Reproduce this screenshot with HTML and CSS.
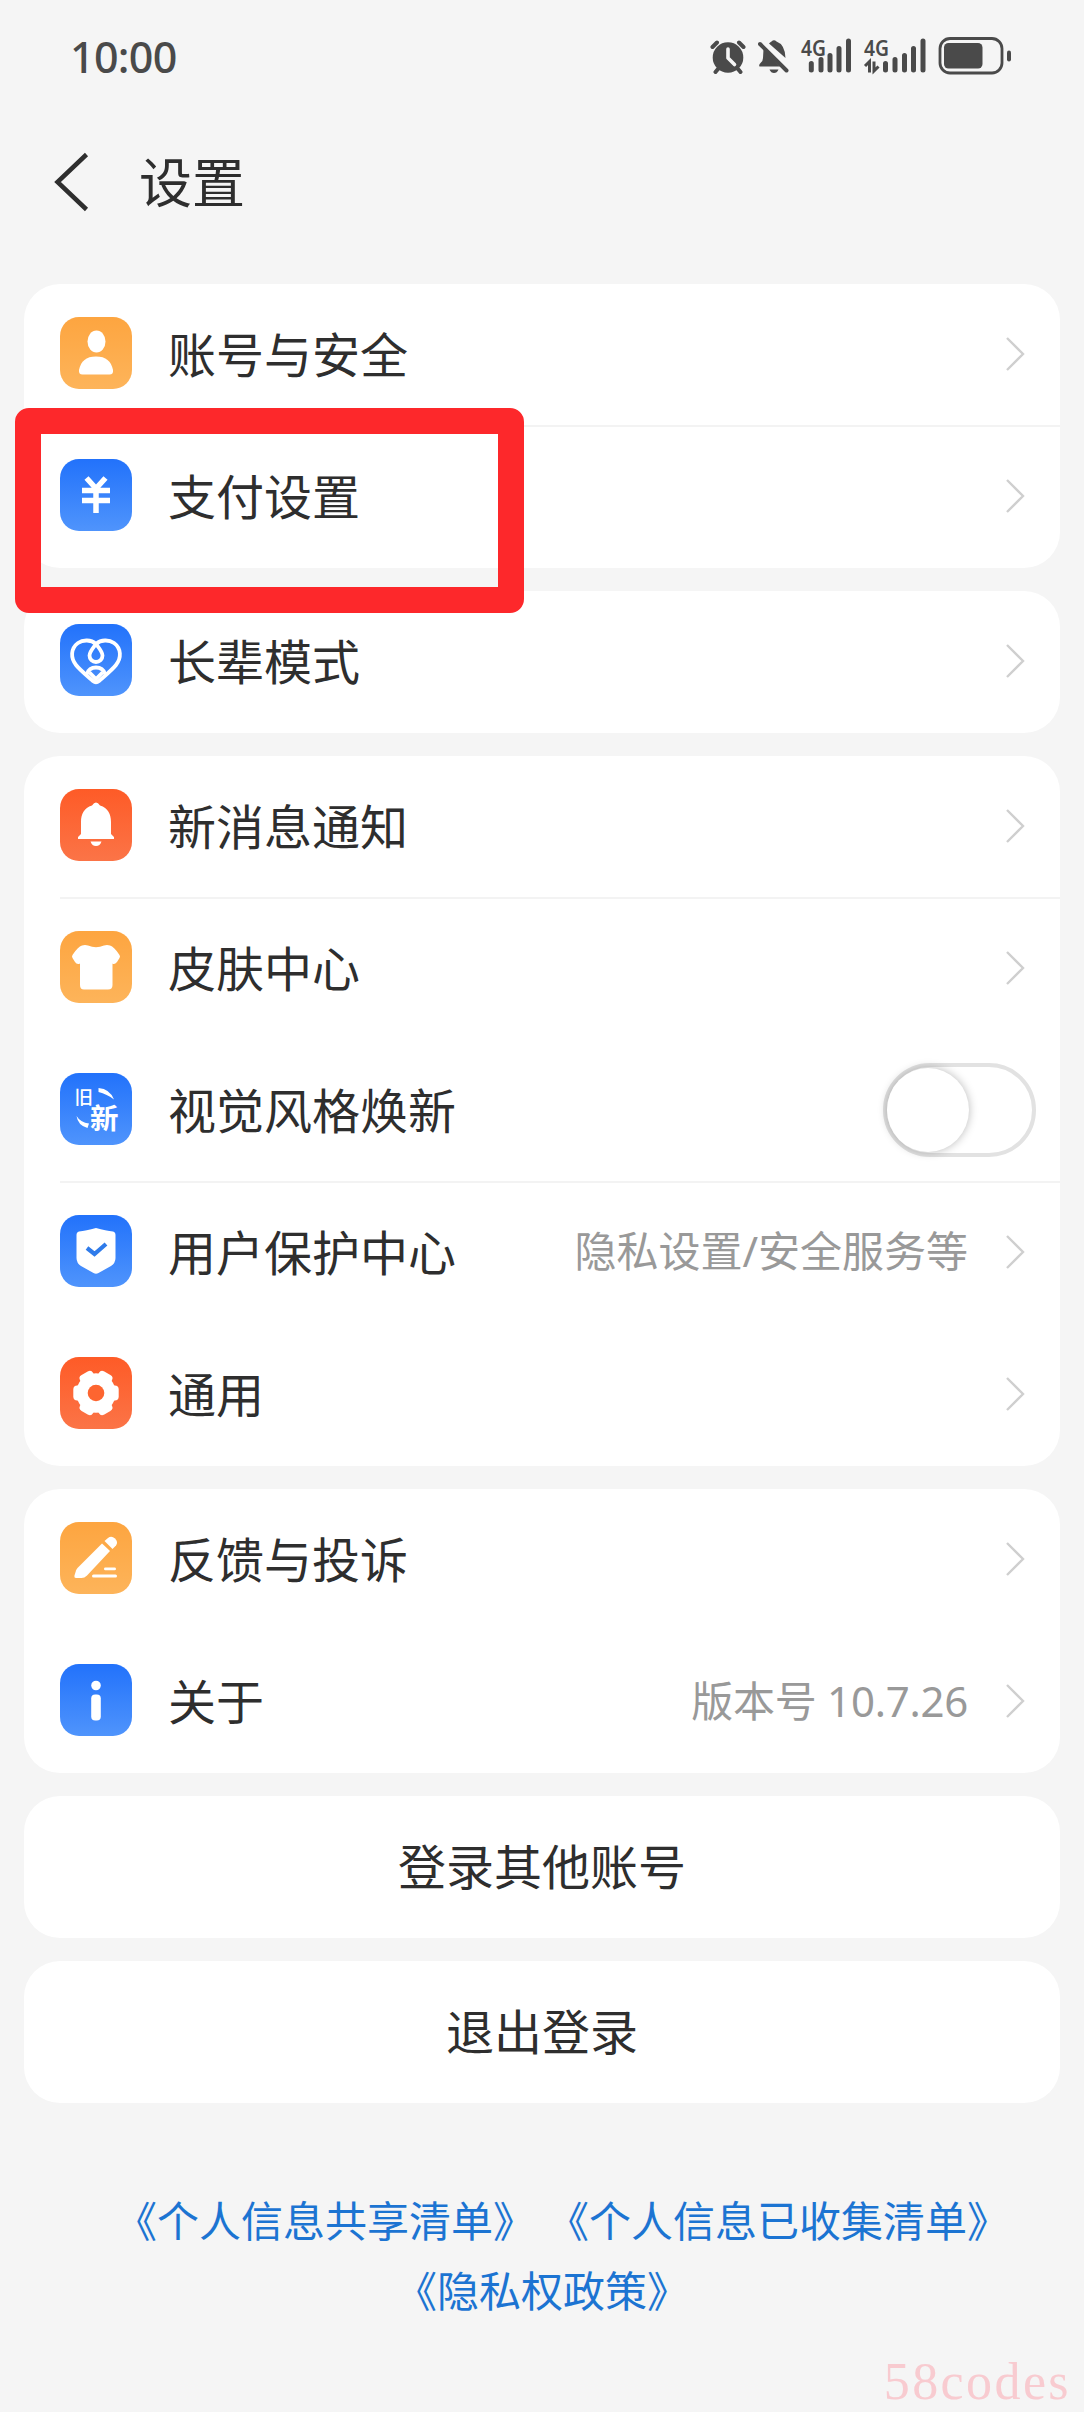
FILE: index.html
```html
<!DOCTYPE html>
<html lang="zh-CN">
<head>
<meta charset="utf-8">
<title>设置</title>
<link rel="stylesheet" href="styles.css">
</head>
<body>
<svg class="defs" width="0" height="0">
  <defs>
    <symbol id="chevron" viewBox="0 0 20 36"><path d="M2 2 L18 18 L2 34" fill="none" stroke="#cfcfcf" stroke-width="2.4"/></symbol>
  </defs>
</svg>
<div class="status">
  <span class="clock">10:00</span>
  <div class="status-icons">
    <svg width="36" height="40" viewBox="0 0 36 40">
      <g fill="none" stroke="#4a4a4a" stroke-width="4" stroke-linecap="round">
        <path d="M2.500 10 L7 5.500 M33.500 10 L29 5.500 M8 32 L5.500 35 M28 32 L30.500 35"/>
      </g>
      <circle cx="18" cy="20.500" r="15.300" fill="#4a4a4a"/>
      <path d="M18 12 V21 L24.500 27.500" fill="none" stroke="#f5f5f5" stroke-width="3.600" stroke-linecap="round" stroke-linejoin="round"/>
    </svg>
    <svg width="31" height="40" viewBox="0 0 31 40">
      <g fill="#4a4a4a">
        <path d="M5.500 12 L22 29.500 H1.500 Q0.500 28 2.500 26 Q5 24 5 21 Z"/>
        <path d="M11 6.500 Q12.500 5 13.500 4.500 Q16 2 18.500 4.500 Q27 7.500 27.500 21 Z"/>
        <path d="M11.500 32.500 H20.500 Q19 36 16 36 Q13 36 11.500 32.500 Z"/>
      </g>
      <path d="M2 7 L28.500 33.500" stroke="#4a4a4a" stroke-width="4" stroke-linecap="round"/>
    </svg>
    <svg class="signal" width="51" height="40" viewBox="0 0 51 40">
      <text x="0" y="18.500" textLength="25" lengthAdjust="spacingAndGlyphs">4G</text>
      <path d="M10.300 26.500 V33 M20 22.500 V33 M29 18.500 V33 M38 11.500 V33 M47.500 4 V33"/>
    </svg>
    <svg class="signal" width="62" height="40" viewBox="0 0 62 40">
      <text x="0" y="18.500" textLength="25" lengthAdjust="spacingAndGlyphs">4G</text>
      <path d="M21.500 26.500 V33 M31 22.500 V33 M40.500 18.500 V33 M49.500 11.500 V33 M59 4 V33"/>
      <path class="arrows" d="M1 29 L5.500 24.500 V35.500 M10 24.500 V34 L14.500 29.500"/>
    </svg>
    <svg width="74" height="40" viewBox="0 0 74 40">
      <rect x="2" y="1.500" width="62" height="34.500" rx="10" fill="none" stroke="#4a4a4a" stroke-width="2.800"/>
      <rect x="6" y="6" width="38.500" height="25.500" rx="4.500" fill="#4a4a4a"/>
      <rect x="69" y="13.500" width="4" height="11" rx="2" fill="#4a4a4a"/>
    </svg>
  </div>
</div>
<header class="header">
  <svg width="36" height="60" viewBox="0 0 36 60"><path d="M33.500 2.500 L4.500 30 L33.500 57.500" fill="none" stroke="#2e2e2e" stroke-width="4.500"/></svg>
  <h1>设置</h1>
</header>
<main class="list">
  <section class="card">
    <div class="row">
      <svg class="icon amber" viewBox="0 0 72 72"><ellipse cx="36.500" cy="24.500" rx="9" ry="11" fill="#fff"/><path d="M36 39.500 C46 39.500 51 44 53 53 Q53.500 57.500 49.500 57.500 H22.500 Q18.500 57.500 19 53 C21 44 26 39.500 36 39.500 Z" fill="#fff"/></svg>
      <span class="label">账号与安全</span><svg class="chev"><use href="#chevron"/></svg>
    </div>
    <div class="row line">
      <svg class="icon blue" viewBox="0 0 72 72"><path d="M26.500 19 L36 29.500 L45.500 19 M22 31.500 H50 M22 41.500 H50 M36 29 V54" fill="none" stroke="#fff" stroke-width="5.500"/></svg>
      <span class="label">支付设置</span><svg class="chev"><use href="#chevron"/></svg>
      <div class="highlight"></div>
    </div>
  </section>
  <section class="card">
    <div class="row">
      <svg class="icon blue" viewBox="0 0 72 72"><g fill="none" stroke="#fff" stroke-width="3.800" stroke-linejoin="round"><path d="M36 20 C31 15.500 23 15.500 18 19 C10.500 24.500 10.500 34 16 41 C19 45 25 50 33 57 Q36 59.500 39 57 C47 50 53 45 56 41 C61.500 34 61.500 24.500 54 19 C49 15.500 41 15.500 36 20 Z"/><path d="M36 20 C33 24 29.500 28 29.500 31.500 A6.500 6.500 0 0 0 42.500 31.500 C42.500 28 39 24 36 20 Z"/><path d="M27 50 Q29 43.500 36 43.500 Q43 43.500 45 50"/><path d="M29.500 48.500 L36 55 L42.500 48.500"/></g></svg>
      <span class="label">长辈模式</span><svg class="chev"><use href="#chevron"/></svg>
    </div>
  </section>
  <section class="card">
    <div class="row">
      <svg class="icon red" viewBox="0 0 72 72"><path d="M32 16.500 Q36 10.500 40 16.500 C48 19 51 25 51 33 V45 L54 48 V50 H18 V48 L21 45 V33 C21 25 24 19 32 16.500 Z" fill="#fff"/><path d="M30.500 52.500 H41.500 Q40 57 36 57 Q32 57 30.500 52.500 Z" fill="#fff"/></svg>
      <span class="label">新消息通知</span><svg class="chev"><use href="#chevron"/></svg>
    </div>
    <div class="row line">
      <svg class="icon amber" viewBox="0 0 72 72"><path d="M22 14.500 Q25 13.500 28 14.500 Q36 18 44 14.500 Q47 13.500 50 14.500 Q54 15.500 59.500 24 Q60.500 25.500 59.500 27 L57 31 Q54.500 34 52.500 32.500 V54 Q52.500 58.500 48 58.500 H24 Q20 58.500 20 54 V32.500 Q17 34 15 31 L12.500 27 Q11.500 25.500 12.500 24 Q18 15.500 22 14.500 Z" fill="#fff"/></svg>
      <span class="label">皮肤中心</span><svg class="chev"><use href="#chevron"/></svg>
    </div>
    <div class="row">
      <svg class="icon blue old-new" viewBox="0 0 72 72"><text x="14.500" y="31" font-size="18.500">旧</text><text class="new" x="30" y="56" font-size="28.500">新</text><path d="M38.500 15 Q50 16 54 26.500 Q47 21 38.500 19 Z M16.500 43 Q20.500 49.500 29 50.500 L27.500 55 Q18 52.500 16.500 43 Z" fill="#fff"/></svg>
      <span class="label">视觉风格焕新</span><span class="toggle"><span class="knob"></span></span>
    </div>
    <div class="row line">
      <svg class="icon blue" viewBox="0 0 72 72"><path d="M36 13 Q46 15.500 53 16.500 Q55.500 17 55.500 20 V43 Q55.500 48 51 51 L38.500 58 Q36 59.500 33.500 58 L21 51 Q16.500 48 16.500 43 V20 Q16.500 17 19 16.500 Q26 15.500 36 13 Z" fill="#fff"/><path d="M27 33 L34.500 39 L46 29" fill="none" stroke="#2f7bea" stroke-width="4.200"/></svg>
      <span class="label">用户保护中心</span><span class="value">隐私设置/安全服务等</span><svg class="chev"><use href="#chevron"/></svg>
    </div>
    <div class="row">
      <svg class="icon red" viewBox="0 0 72 72"><g fill="#fff"><circle cx="36" cy="36" r="19.800"/><rect x="13.300" y="28.500" width="45.400" height="15" rx="4"/><rect x="13.300" y="28.500" width="45.400" height="15" rx="4" transform="rotate(60 36 36)"/><rect x="13.300" y="28.500" width="45.400" height="15" rx="4" transform="rotate(120 36 36)"/></g><circle cx="36" cy="36" r="8.300" fill="#fd6530"/></svg>
      <span class="label">通用</span><svg class="chev"><use href="#chevron"/></svg>
    </div>
  </section>
  <section class="card">
    <div class="row">
      <svg class="icon amber" viewBox="0 0 72 72"><g fill="#fff"><path d="M42 21.500 L50 29 L27 53.500 Q24.500 56 21.500 56 H16 Q14 56 14.500 53.500 L16 48.500 Q16.500 47 18 45.500 Z"/><path d="M44.500 19 L48 16 Q51.500 13.500 55 16.500 Q58.500 20 56 23.500 L52.500 27 Z"/><rect x="44" y="45.500" width="12" height="2.800" rx="1.400"/><rect x="32" y="52.500" width="25" height="3" rx="1.500"/></g></svg>
      <span class="label">反馈与投诉</span><svg class="chev"><use href="#chevron"/></svg>
    </div>
    <div class="row">
      <svg class="icon blue" viewBox="0 0 72 72"><circle cx="36" cy="21.500" r="4.800" fill="#fff"/><rect x="31.200" y="30.500" width="9.600" height="26" rx="4" fill="#fff"/></svg>
      <span class="label">关于</span><span class="value version">版本号 10.7.26</span><svg class="chev"><use href="#chevron"/></svg>
    </div>
  </section>
  <button class="card action">登录其他账号</button>
  <button class="card action">退出登录</button>
</main>
<footer class="links">
  <div class="pair"><a>《个人信息共享清单》</a><a>《个人信息已收集清单》</a></div>
  <div><a>《隐私权政策》</a></div>
</footer>
<div class="watermark">58codes</div>
</body>
</html>
```
FILE: styles.css
```css
* { box-sizing: border-box; }
body {
  margin: 0;
  width: 1084px;
  height: 2412px;
  overflow: hidden;
  background: #f5f5f5;
  color: #2e2e2e;
  font-family: "Noto Sans CJK SC", sans-serif;
  display: flex;
  flex-direction: column;
}
.defs { display: none; }
svg { display: block; flex: none; }

.status {
  height: 114px;
  padding: 0 72px 0 70px;
  display: flex;
  align-items: center;
  justify-content: space-between;
  color: #4a4a4a;
}
.clock {
  font: 500 43px/60px "Noto Sans", sans-serif;
  letter-spacing: -0.7px;
  padding-bottom: 1px;
}
.status-icons { display: flex; gap: 12px; padding-bottom: 1px; }
.signal { overflow: visible; }
.signal text { font: 600 22px "Noto Sans", sans-serif; fill: #4a4a4a; }
.signal path { fill: none; stroke: #4a4a4a; stroke-width: 5; stroke-linecap: round; }
.signal .arrows { stroke-width: 3; stroke-linecap: butt; }

.header {
  height: 170px;
  padding: 0 53px 34px;
  display: flex;
  align-items: center;
  gap: 50px;
}
.header h1 { margin: 0; font-size: 53px; line-height: 70px; font-weight: 400; padding-bottom: 5px; }

.list { padding: 0 24px; display: flex; flex-direction: column; gap: 23px; }
.card { background: #fff; border-radius: 36px; }
.row {
  position: relative;
  height: 142px;
  padding: 0 35px 4px 36px;
  display: flex;
  align-items: center;
}
.line::before {
  content: "";
  position: absolute;
  left: 36px;
  right: 0;
  top: -1px;
  height: 2px;
  background: #f3f3f3;
}
.icon { width: 72px; height: 72px; border-radius: 19px; }
.amber { background: linear-gradient(#fda540, #fdb45a); }
.blue { background: linear-gradient(#2272fb, #4f94fc); }
.red { background: linear-gradient(#fe5b27, #fb7447); }
.old-new text { fill: #fff; font-weight: 500; }
.old-new .new { font-weight: 700; }
.label { margin-left: 36px; padding-bottom: 3px; font-size: 48px; line-height: 70px; white-space: nowrap; }
.value {
  margin-left: auto;
  font: 42px/64px "Noto Sans", "Noto Sans CJK SC", sans-serif;
  color: #999;
  white-space: nowrap;
}
.version { letter-spacing: -0.25px; padding-top: 2px; }
.chev { width: 20px; height: 36px; margin: 1px 0 0 auto; }
.value + .chev { margin-left: 37px; }

.toggle {
  width: 153px;
  height: 94px;
  margin: 1px -11px 0 auto;
  border: 4px solid #e2e2e2;
  border-radius: 47px;
  display: flex;
  align-items: center;
}
.knob {
  width: 82px;
  height: 84px;
  border-radius: 50%;
  background: #fff;
  box-shadow: 0 0 10px rgba(0, 0, 0, 0.28);
}

.highlight {
  position: absolute;
  left: -9px;
  top: -18px;
  width: 509px;
  height: 205px;
  border: 26.500px solid #fd282b;
  border-radius: 14px;
  z-index: 1;
}

.action {
  height: 142px;
  padding: 0 0 6px;
  border: 0;
  color: inherit;
  font: 48px/70px "Noto Sans CJK SC", sans-serif;
}

.links {
  padding-top: 81px;
  font-size: 42px;
  line-height: 70px;
  color: #1c74d2;
  text-align: center;
}
.pair { display: flex; justify-content: center; gap: 12px; padding-left: 40px; }

.watermark {
  margin-top: auto;
  padding: 0 13px 0 0;
  text-align: right;
  font: 52px/60px "Liberation Serif", serif;
  letter-spacing: 2.4px;
  color: #f8cbd0;
}
```
